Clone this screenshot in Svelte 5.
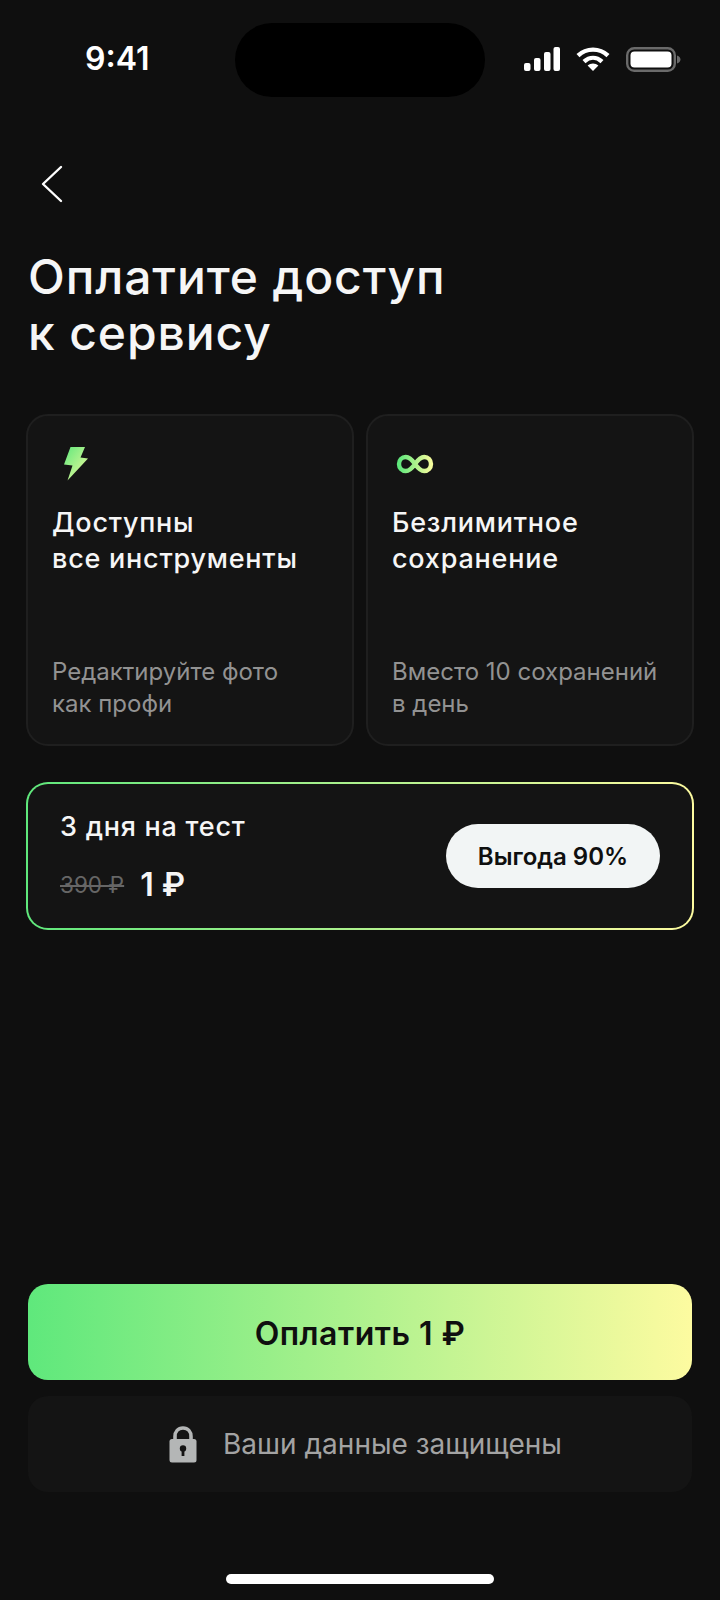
<script>
    const features = [
        { icon: "bolt", title: ["Доступны", "все инструменты"], note: ["Редактируйте фото", "как профи"] },
        { icon: "infinity", title: ["Безлимитное", "сохранение"], note: ["Вместо 10 сохранений", "в день"] }
    ];
</script>

<div class="page">
    <div class="status">
        <span class="time">9:41</span>
        <div class="island"></div>
        <div class="indicators">
            <svg width="36" height="24" viewBox="0 0 36 24" fill="#fff">
                <rect x="0" y="16" width="6.5" height="8" rx="2" />
                <rect x="10" y="11" width="6.5" height="13" rx="2" />
                <rect x="20" y="5" width="6.5" height="19" rx="2" />
                <rect x="29.5" y="0" width="6.5" height="24" rx="2" />
            </svg>
            <svg width="34" height="24" viewBox="0 0 34 24" fill="none" stroke="#fff" stroke-width="4.4">
                <path d="M2 8.6C10.5 0.6 23.5 0.6 32 8.6" />
                <path d="M8 14.6C13.5 9.6 20.5 9.6 26 14.6" />
                <path d="M17 24L11.6 18.6C14.6 15.8 19.4 15.8 22.4 18.6Z" fill="#fff" stroke="none" />
            </svg>
            <svg width="55" height="25" viewBox="0 0 55 25" fill="none">
                <rect x="1.2" y="1.2" width="47.6" height="22.6" rx="7" stroke="#6a6a6a" stroke-width="2.4" />
                <rect x="4.5" y="4.5" width="41" height="16" rx="4" fill="#fff" />
                <path d="M51 8.5C53.5 9.5 54.5 11 54.5 12.5C54.5 14 53.5 15.5 51 16.5Z" fill="#6a6a6a" />
            </svg>
        </div>
    </div>

    <svg class="back" width="22" height="38" viewBox="0 0 22 38" fill="none" stroke="#fff" stroke-width="2.4" stroke-linecap="round" stroke-linejoin="round">
        <path d="M20 2L2 19L20 36" />
    </svg>

    <h1>Оплатите доступ<br />к сервису</h1>

    <div class="features">
        {#each features as f}
            <div class="card">
                {#if f.icon == "bolt"}
                    <svg class="icon" width="40" height="36" viewBox="0 0 40 36">
                        <defs>
                            <linearGradient id="boltGrad" x1="0" y1="0" x2="1" y2="1">
                                <stop offset="0" stop-color="#5fe87c" />
                                <stop offset="1" stop-color="#f2fb9c" />
                            </linearGradient>
                        </defs>
                        <path d="M16.5 1H31L26.5 11.5L34 12.5L13.5 34.5L18.5 19.5L10 18.5Z" fill="url(#boltGrad)" />
                    </svg>
                {:else}
                    <svg class="icon" width="40" height="36" viewBox="0 0 40 36">
                        <defs>
                            <linearGradient id="infGrad" x1="0" y1="0" x2="1" y2="0">
                                <stop offset="0" stop-color="#5fe87c" />
                                <stop offset="1" stop-color="#f4fb9c" />
                            </linearGradient>
                        </defs>
                        <path d="M21 18C17.5 13 15 11 11.8 11C7.8 11 5 14.1 5 18C5 21.9 7.8 25 11.8 25C15 25 17.5 23 21 18C24.5 13 27 11 30.2 11C34.2 11 37 14.1 37 18C37 21.9 34.2 25 30.2 25C27 25 24.5 23 21 18Z" fill="none" stroke="url(#infGrad)" stroke-width="4.4" />
                    </svg>
                {/if}
                <h2>{f.title[0]}<br />{f.title[1]}</h2>
                <p>{f.note[0]}<br />{f.note[1]}</p>
            </div>
        {/each}
    </div>

    <div class="tariff">
        <div class="tariff-info">
            <div class="tariff-name">3 дня на тест</div>
            <div class="prices">
                <s>390 ₽</s>
                <strong>1 ₽</strong>
            </div>
        </div>
        <div class="badge">Выгода 90%</div>
    </div>

    <button class="pay">Оплатить 1 ₽</button>

    <div class="secure">
        <svg width="28" height="37" viewBox="0 0 28 37">
            <path d="M6 14V10.5C6 5.5 9 2 14 2C19 2 22 5.5 22 10.5V14" fill="none" stroke="#b4b6b6" stroke-width="3.6" />
            <rect x="0.5" y="13" width="27" height="23.5" rx="2.5" fill="#b4b6b6" />
            <circle cx="14" cy="22.5" r="3.2" fill="#141414" />
            <rect x="12.6" y="23" width="2.8" height="7" fill="#141414" />
        </svg>
        <span>Ваши данные защищены</span>
    </div>

    <div class="home"></div>
</div>

<style>
    :global(body) {
        background: #0f0f0f;
    }

    .page {
        width: 720px;
        height: 1600px;
        box-sizing: border-box;
        display: flex;
        flex-direction: column;
        padding: 23px 26px 16px;
        background: #0f0f0f;
        font-family: Inter, "Noto Sans", sans-serif;
        color: #fff;
    }

    .status {
        display: flex;
        align-items: center;
        height: 74px;
        flex: none;
    }
    .time {
        width: 209px;
        padding: 0 0 3px 59px;
        box-sizing: border-box;
        font-size: 32px;
        font-weight: 600;
    }
    .island {
        width: 250px;
        height: 74px;
        border-radius: 37px;
        background: #000;
        flex: none;
    }
    .indicators {
        display: flex;
        align-items: center;
        margin-left: 39px;
        padding-bottom: 2px;
        gap: 16px;
    }

    .back {
        display: block;
        margin: 68px 0 0 15px;
        flex: none;
    }

    h1 {
        margin: 46px 0 0 2px;
        font-size: 48px;
        line-height: 56px;
        font-weight: 500;
        letter-spacing: 0.9px;
        color: #f6f6f6;
    }

    .features {
        display: flex;
        gap: 12px;
        margin-top: 53px;
    }
    .card {
        flex: 1;
        height: 332px;
        box-sizing: border-box;
        padding: 30px 24px 24px;
        background: #141414;
        border: 2px solid #1f1f1f;
        border-radius: 22px;
        display: flex;
        flex-direction: column;
    }
    .icon {
        display: block;
        margin-left: 2px;
        flex: none;
    }
    h2 {
        margin: 23px 0 0;
        font-size: 27px;
        line-height: 36px;
        font-weight: 500;
        letter-spacing: 0.77px;
        color: #f6f6f6;
    }
    p {
        margin: auto 0 0;
        font-size: 24px;
        line-height: 32px;
        color: #929292;
    }

    .tariff {
        display: flex;
        align-items: center;
        justify-content: space-between;
        height: 148px;
        box-sizing: border-box;
        margin-top: 36px;
        padding: 0 32px;
        border: 2px solid transparent;
        border-radius: 22px;
        background:
            linear-gradient(#141414, #141414) padding-box,
            linear-gradient(90deg, #5fe87c, #fdfba0) border-box;
    }
    .tariff-info {
        padding-top: 2px;
    }
    .tariff-name {
        font-size: 27px;
        font-weight: 500;
        letter-spacing: 0.75px;
        color: #f6f6f6;
    }
    .prices {
        display: flex;
        align-items: center;
        gap: 16px;
        margin-top: 22px;
    }
    s {
        font-size: 22.5px;
        color: #666;
    }
    strong {
        font-size: 32px;
        font-weight: 600;
        color: #f6f6f6;
    }
    .badge {
        width: 214px;
        height: 64px;
        border-radius: 32px;
        background: #f2f5f5;
        color: #0f0f0f;
        display: flex;
        align-items: center;
        justify-content: center;
        font-size: 24px;
        font-weight: 600;
    }

    .pay {
        display: block;
        margin: auto 2px 0;
        height: 96px;
        flex: none;
        border: none;
        padding: 2px 0 0;
        border-radius: 20px;
        background: linear-gradient(90deg, #5fe87c, #fdfba0);
        color: #0f0f0f;
        font-family: inherit;
        font-size: 32px;
        font-weight: 600;
        letter-spacing: 0.5px;
    }

    .secure {
        display: flex;
        align-items: center;
        justify-content: center;
        gap: 26px;
        height: 96px;
        flex: none;
        margin: 16px 2px 0;
        padding-left: 11px;
        border-radius: 20px;
        background: #141414;
        color: #a3a3a3;
        font-size: 28px;
    }

    .home {
        width: 268px;
        height: 10px;
        flex: none;
        margin: 82px auto 0;
        border-radius: 5px;
        background: #fff;
    }
</style>
